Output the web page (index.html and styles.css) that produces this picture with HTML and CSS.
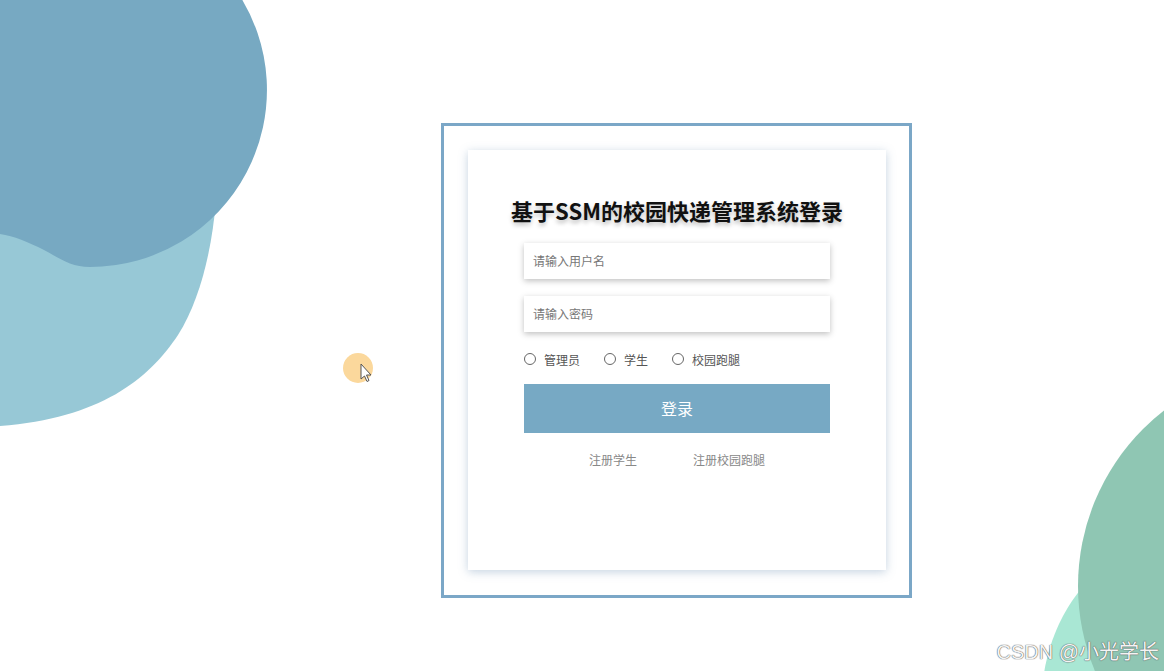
FILE: index.html
```html
<!DOCTYPE html>
<html lang="zh-CN">
<head>
<meta charset="utf-8">
<title>登录</title>
<link rel="stylesheet" href="styles.css">
</head>
<body>
<svg class="bg" width="1164" height="671" viewBox="0 0 1164 671" xmlns="http://www.w3.org/2000/svg">
  <path fill="#97c8d6" d="M0,200 L216,200 C212,250 200,300 178,335 C148,380 100,418 0,426 Z"/>
  <path fill="#77a9c2" d="M0,-10 L236,-10 A177,177 0 0 1 90,267 C72,267 62,260 44,250 C28,242 14,236 0,234 Z"/>
  <circle cx="1220" cy="700" r="178" fill="#a9e7d4"/>
  <circle cx="1300" cy="586" r="222" fill="#8fc6b3"/>
  <circle cx="358" cy="368" r="15" fill="#fbd89c"/>
  <path d="M361,364 L361,379 L364.5,376 L367,381.5 L369,380.5 L366.5,375 L371,375 Z" fill="#fff" stroke="#555" stroke-width="1" stroke-linejoin="round"/>
</svg>

<div class="frame">
  <div class="card">
    <h1 class="title">基于SSM的校园快递管理系统登录</h1>
    <div class="form">
      <div class="field">请输入用户名</div>
      <div class="field">请输入密码</div>
      <div class="roles">
        <label class="role"><span class="radio"></span>管理员</label>
        <label class="role"><span class="radio"></span>学生</label>
        <label class="role"><span class="radio"></span>校园跑腿</label>
      </div>
      <div class="btn">登录</div>
      <div class="links">
        <span class="link">注册学生</span>
        <span class="link">注册校园跑腿</span>
      </div>
    </div>
  </div>
</div>

<div class="watermark">CSDN @小光学长</div>
</body>
</html>
```

FILE: styles.css
```css
html, body {
  margin: 0;
  padding: 0;
}
body {
  width: 1164px;
  height: 671px;
  overflow: hidden;
  position: relative;
  background: #ffffff;
  font-family: "Noto Sans CJK SC", "Noto Sans", sans-serif;
}
.bg {
  position: absolute;
  left: 0;
  top: 0;
  z-index: 0;
}
.frame {
  position: relative;
  z-index: 1;
  box-sizing: border-box;
  width: 471px;
  height: 475px;
  margin: 123px 0 0 441px;
  border: 3px solid #7ba7c7;
  padding: 24px 23px 25px 24px;
  background: #ffffff;
}
.card {
  box-sizing: border-box;
  width: 418px;
  height: 420px;
  background: #fff;
  box-shadow: 0 2px 9px rgba(90, 130, 170, 0.35);
  display: flex;
  flex-direction: column;
  align-items: center;
  padding-top: 44px;
}
.title {
  margin: 0;
  font-size: 22px;
  line-height: 32px;
  font-weight: 700;
  color: #111;
  text-shadow: 0 3px 4px rgba(0, 0, 0, 0.25);
}
.form {
  width: 306px;
  margin-top: 17px;
  display: flex;
  flex-direction: column;
}
.field {
  height: 36px;
  line-height: 36px;
  padding-left: 9px;
  font-size: 12px;
  color: #777;
  background: #fff;
  box-shadow: 0 2px 6px rgba(0, 0, 0, 0.25);
  margin-bottom: 17px;
}
.roles {
  display: flex;
  gap: 24px;
  height: 18px;
  align-items: center;
  margin-top: 1px;
}
.role {
  display: flex;
  align-items: center;
  gap: 8px;
  font-size: 12px;
  color: #555;
}
.radio {
  box-sizing: border-box;
  width: 12px;
  height: 12px;
  border: 1px solid #666;
  border-radius: 50%;
  background: #fff;
}
.btn {
  margin-top: 16px;
  height: 49px;
  line-height: 49px;
  background: #77a9c4;
  color: #fff;
  text-align: center;
  font-size: 16px;
}
.links {
  display: flex;
  justify-content: center;
  gap: 56px;
  margin-top: 18px;
  font-size: 12px;
  color: #888;
  line-height: 18px;
}
.watermark {
  position: absolute;
  right: 5px;
  bottom: 6px;
  z-index: 2;
  font-family: "Liberation Sans", "Noto Sans CJK SC", sans-serif;
  font-size: 20px;
  color: #f4f4f4;
  text-shadow: 0 0 1px #555, 0 0 1px #555;
}
```
